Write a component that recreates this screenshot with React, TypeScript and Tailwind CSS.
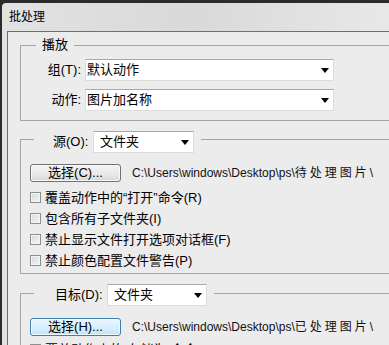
import React from "react"

const font = "font-['Liberation_Sans','Noto_Sans_CJK_SC',sans-serif]"

function Arrow() {
  return (
    <svg width="8" height="5" viewBox="0 0 8 5" className="shrink-0">
      <path d="M0 0h8L4 5z" fill="#000" />
    </svg>
  )
}

function Select({ value, width, pad }: { value: string; width: string; pad: string }) {
  return (
    <div
      className={`${width} ${pad} h-[22px] flex items-center justify-between pr-[4px] bg-white border border-[#dcdcdc] border-t-[#a8a8a8] text-[13px] leading-[16px] text-black`}
    >
      <span className="whitespace-nowrap">{value}</span>
      <Arrow />
    </div>
  )
}

function Check({ label }: { label: string }) {
  return (
    <div className="h-[21px] flex items-center pl-[9px] gap-[4px] text-[13px] leading-[16px] text-black whitespace-nowrap">
      <span className="w-[11px] h-[11px] shrink-0 border border-[#8e8f8f] bg-linear-to-br from-[#d8d8d8] to-[#f7f7f7] shadow-[inset_0_0_0_1px_#f4f4f4]" />
      <span>{label}</span>
    </div>
  )
}

function PathRow({ btn, focused, path }: { btn: string; focused?: boolean; path: string }) {
  return (
    <div className="flex items-center pl-[9px]">
      <div
        className={`w-[91px] h-[18px] shrink-0 flex items-center justify-center rounded-[3px] border text-[13px] leading-[16px] text-black ${
          focused
            ? "border-[#3c7fb1] bg-linear-to-b from-[#eaf6fd] via-[#d9effc] to-[#bee6fd] shadow-[inset_0_0_0_1px_#f0faff]"
            : "border-[#707070] bg-linear-to-b from-[#f3f3f3] via-[#ebebeb] to-[#d8d8d8] shadow-[inset_0_0_0_1px_#fbfbfb]"
        }`}
      >
        {btn}
      </div>
      <span className="ml-[11px] text-[12px] leading-[16px] text-[#111] whitespace-nowrap">
        C:\Users\windows\Desktop\ps\
        <span className="tracking-[3px]">{path}</span>\
      </span>
    </div>
  )
}

export default function App() {
  return (
    <div className={`w-[389px] h-[345px] overflow-hidden bg-[#2b2b2b] pt-[3px] pl-[2px] ${font}`}>
      <div className="h-full flex flex-col rounded-tl-[4px] bg-linear-to-r from-[#e2e2e2] via-[#d9d9d9] to-[#e8e8e8]">
        {/* title bar */}
        <div className="h-[28px] shrink-0 flex items-center pl-[7px] text-[12px] leading-[16px] text-black">
          批处理
        </div>

        {/* dialog body */}
        <div className="flex-1 ml-[5px] border-t border-l border-[#6e6e6e] bg-[#ececec] flex flex-col">
          {/* 播放 */}
          <div className="ml-[12px] mt-[13px] border border-r-0 border-[#a5a5a5] flex flex-col pb-[9px]">
            <div className="-mt-[9px] ml-[15px] self-start px-[6px] bg-[#ececec] text-[13px] leading-[16px] text-black">
              播放
            </div>
            <div className="mt-[6px] flex items-center">
              <span className="w-[60px] text-right text-[13px] leading-[16px] text-black whitespace-nowrap">组(T):</span>
              <div className="ml-[4px]">
                <Select value="默认动作" width="w-[249px]" pad="pl-[1px]" />
              </div>
            </div>
            <div className="mt-[8px] flex items-center">
              <span className="w-[60px] text-right text-[13px] leading-[16px] text-black whitespace-nowrap">动作:</span>
              <div className="ml-[4px]">
                <Select value="图片加名称" width="w-[249px]" pad="pl-[1px]" />
              </div>
            </div>
          </div>

          {/* 源 */}
          <div className="ml-[12px] mt-[18px] border border-r-0 border-[#a5a5a5] flex flex-col pb-[2px]">
            <div className="-mt-[9px] ml-[13px] self-start flex items-center pl-[19px] pr-[7px] bg-[#ececec]">
              <span className="w-[35px] text-right text-[13px] leading-[16px] text-black whitespace-nowrap">源(O):</span>
              <div className="ml-[5px]">
                <Select value="文件夹" width="w-[101px]" pad="pl-[6px]" />
              </div>
            </div>
            <div className="mt-[11px]">
              <PathRow btn="选择(C)..." path="待处理图片" />
            </div>
            <div className="mt-[5px] flex flex-col">
              <Check label="覆盖动作中的“打开”命令(R)" />
              <Check label="包含所有子文件夹(I)" />
              <Check label="禁止显示文件打开选项对话框(F)" />
              <Check label="禁止颜色配置文件警告(P)" />
            </div>
          </div>

          {/* 目标 */}
          <div className="ml-[12px] mt-[19px] border border-r-0 border-[#a5a5a5] flex flex-col pb-[2px]">
            <div className="-mt-[10px] ml-[13px] self-start flex items-center pl-[21px] pr-[7px] bg-[#ececec]">
              <span className="w-[45px] text-right text-[13px] leading-[16px] text-black whitespace-nowrap">目标(D):</span>
              <div className="ml-[7px]">
                <Select value="文件夹" width="w-[100px]" pad="pl-[6px]" />
              </div>
            </div>
            <div className="mt-[12px]">
              <PathRow btn="选择(H)..." focused path="已处理图片" />
            </div>
            <div className="mt-[3px] flex flex-col">
              <Check label="覆盖动作中的“存储为”命令(V)" />
            </div>
          </div>
        </div>
      </div>
    </div>
  )
}
